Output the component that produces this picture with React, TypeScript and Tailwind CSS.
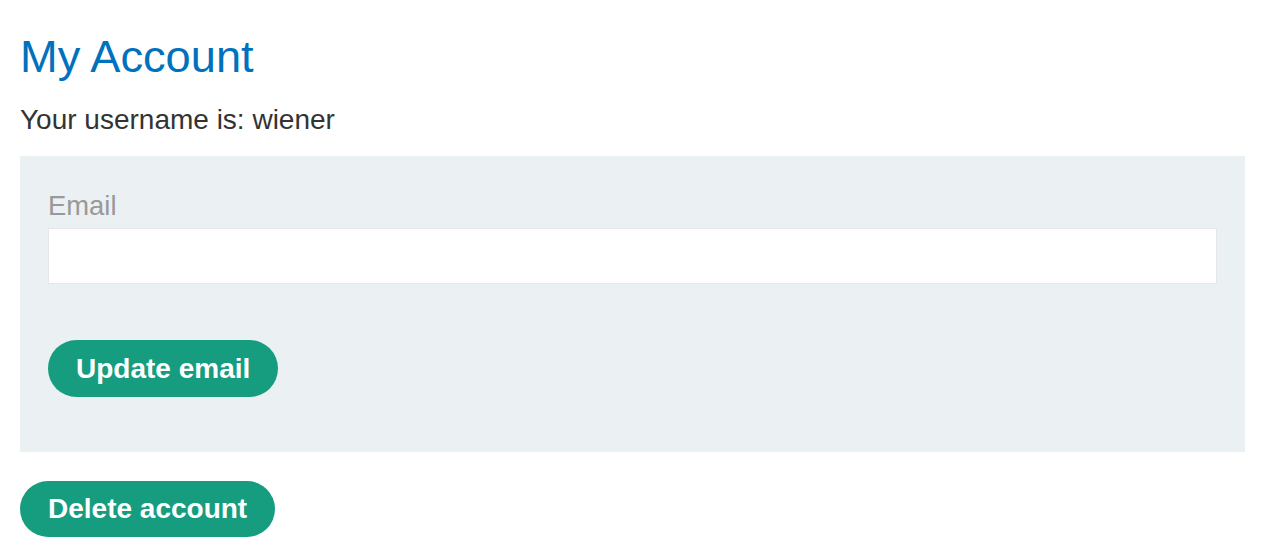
export default function App() {
  return (
    <div
      className="min-h-screen bg-white pl-[20px] pr-[26px] text-[#333332]"
      style={{ fontFamily: '"Liberation Sans", Arial, sans-serif' }}
    >
      <h1 className="pt-[32px] text-[45.2px] leading-[50px] font-normal text-[#0071bc]">My Account</h1>
      <p className="mt-[22px] text-[28px] leading-[32px]">Your username is: wiener</p>

      <form
        className="mt-[20px] flex flex-col bg-[#ebf0f2] px-[28px] pt-[34px] pb-[55px]"
        onSubmit={(e) => e.preventDefault()}
      >
        <label className="text-[27.4px] leading-[32px] text-[#999999]">Email</label>
        <input
          type="email"
          className="mt-[6px] h-[56px] w-full border border-[#e6e6e6] bg-white px-3 text-[27px] outline-none"
        />
        <div className="mt-[56px]">
          <button
            type="submit"
            className="h-[57px] rounded-full bg-[#169d7f] px-[28px] text-[28px] leading-none font-bold text-white"
          >
            Update email
          </button>
        </div>
      </form>

      <div className="mt-[29px]">
        <button className="h-[56px] rounded-full bg-[#169d7f] px-[28px] text-[28px] leading-none font-bold text-white">
          Delete account
        </button>
      </div>
    </div>
  );
}
